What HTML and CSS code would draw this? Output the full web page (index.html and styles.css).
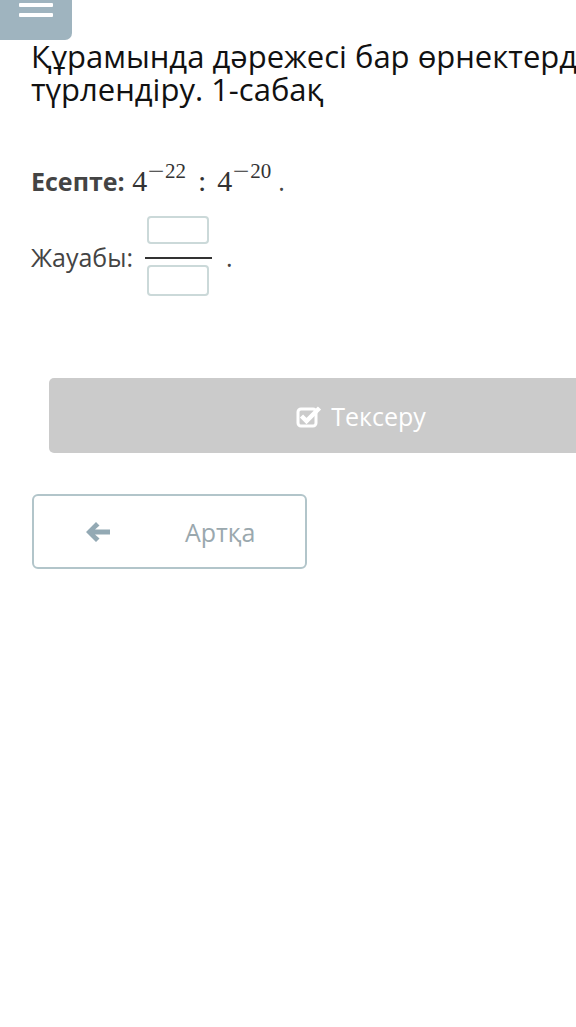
FILE: index.html
```html
<!DOCTYPE html>
<html lang="kk">
<head>
    <meta charset="UTF-8">
    <meta name="viewport" content="width=device-width, initial-scale=1.0">
    <title>Құрамында дәрежесі бар өрнектерді түрлендіру</title>
    <link rel="stylesheet" href="styles.css">
</head>
<body>
    <!-- menu toggle -->
    <div class="menu-btn">
        <span class="bar"></span>
        <span class="bar"></span>
    </div>

    <main class="page">
        <h1 class="lesson-title">Құрамында дәрежесі бар өрнектерді түрлендіру. 1-сабақ</h1>

        <p class="task"><b>Есепте:</b> <span class="math">4<sup><span class="minus">−</span>22</sup><span class="colon">:</span>4<sup><span class="minus">−</span>20</sup></span><span class="dot">.</span></p>

        <div class="answer">
            <span class="answer-label">Жауабы:</span>
            <div class="frac">
                <input class="frac-box top" type="text">
                <div class="frac-line"></div>
                <input class="frac-box bottom" type="text">
            </div>
            <span class="answer-dot">.</span>
        </div>

        <button class="check-btn" type="button">
            <svg class="check-icon" width="26" height="24" viewBox="0 0 26 24">
                <rect x="2" y="5" width="18" height="17" rx="3" fill="none" stroke="#fff" stroke-width="3"/>
                <path d="M5.5 12 L10.5 17 L23.5 4" fill="none" stroke="#fff" stroke-width="4.5" stroke-linejoin="miter"/>
            </svg>
            <span>Тексеру</span>
        </button>

        <button class="back-btn" type="button">
            <svg class="back-icon" width="26" height="22" viewBox="0 0 26 22">
                <path d="M11 1 L1 11 L11 21 L14.5 17.5 L10 13.5 L25 13.5 L25 8.5 L10 8.5 L14.5 4.5 Z" fill="#93a9b4"/>
            </svg>
            <span class="back-text">Артқа</span>
        </button>
    </main>
</body>
</html>
```

FILE: styles.css
```css
/* Basic page styles */
body {
    margin: 0;
    padding: 0;
    background-color: #fff;
    font-family: "Open Sans", "Noto Sans", sans-serif;
    color: #444;
    overflow-x: hidden;
}
.menu-btn {
    width: 72px;
    height: 40px;
    background-color: #9fb4bf;
    border-bottom-right-radius: 7px;
    display: flex;
    flex-direction: column;
    align-items: center;
    gap: 6px;
    padding-top: 3px;
    box-sizing: border-box;
}
.bar {
    display: block;
    width: 34px;
    height: 4px;
    background-color: #fff;
    border-radius: 1px;
}
.page {
    width: 658px;
    padding-left: 31px;
}
.lesson-title {
    margin: 0;
    font-size: 31px;
    font-weight: 400;
    line-height: 33px;
    color: #111;
}
.task {
    margin: 60px 0 0;
    font-size: 25px;
    line-height: 30px;
    color: #444;
}
.task b {
    font-weight: 700;
}
.math {
    font-family: "Liberation Serif", "DejaVu Serif", serif;
    font-size: 30px;
    color: #333;
    margin-left: 1px;
}
.math sup {
    font-size: 21px;
    line-height: 0;
    vertical-align: baseline;
    position: relative;
    top: -13px;
}
.minus {
    display: inline-block;
    margin: 0 3px 0 3px;
    transform: scaleX(1.4);
}
.colon {
    margin: 0 11px 0 12px;
}
.dot {
    margin-left: 7px;
}
.answer {
    display: flex;
    align-items: flex-start;
    margin-top: 20px;
}
.answer-label,
.answer-dot {
    font-size: 25px;
    line-height: 30px;
    margin-top: 26px;
}
.frac {
    display: flex;
    flex-direction: column;
    align-items: center;
    width: 67px;
    margin-left: 12px;
}
.frac-box {
    width: 62px;
    height: 28px;
    box-sizing: border-box;
    border: 2px solid #cbd9d9;
    border-radius: 4px;
    padding: 0;
    margin: 0;
    background: #fff;
}
.frac-box.bottom {
    height: 31px;
}
.frac-line {
    width: 67px;
    height: 2px;
    background-color: #333;
    margin: 13px 0 6px;
}
.answer-dot {
    margin-left: 14px;
}
.check-btn {
    display: flex;
    align-items: center;
    justify-content: center;
    gap: 9px;
    width: 624px;
    height: 75px;
    margin: 82px 0 0 18px;
    background-color: #cbcbcb;
    border: none;
    border-radius: 5px;
    color: #fff;
    font-family: inherit;
    font-size: 25px;
}
.back-btn {
    display: flex;
    align-items: center;
    width: 275px;
    height: 75px;
    margin: 41px 0 0 1px;
    padding: 0 0 0 51px;
    box-sizing: border-box;
    background-color: #fff;
    border: 2px solid #b2c5ca;
    border-radius: 6px;
    font-family: inherit;
    font-size: 25px;
    color: #9aa8ae;
}
.back-text {
    margin-left: 74px;
}
```
